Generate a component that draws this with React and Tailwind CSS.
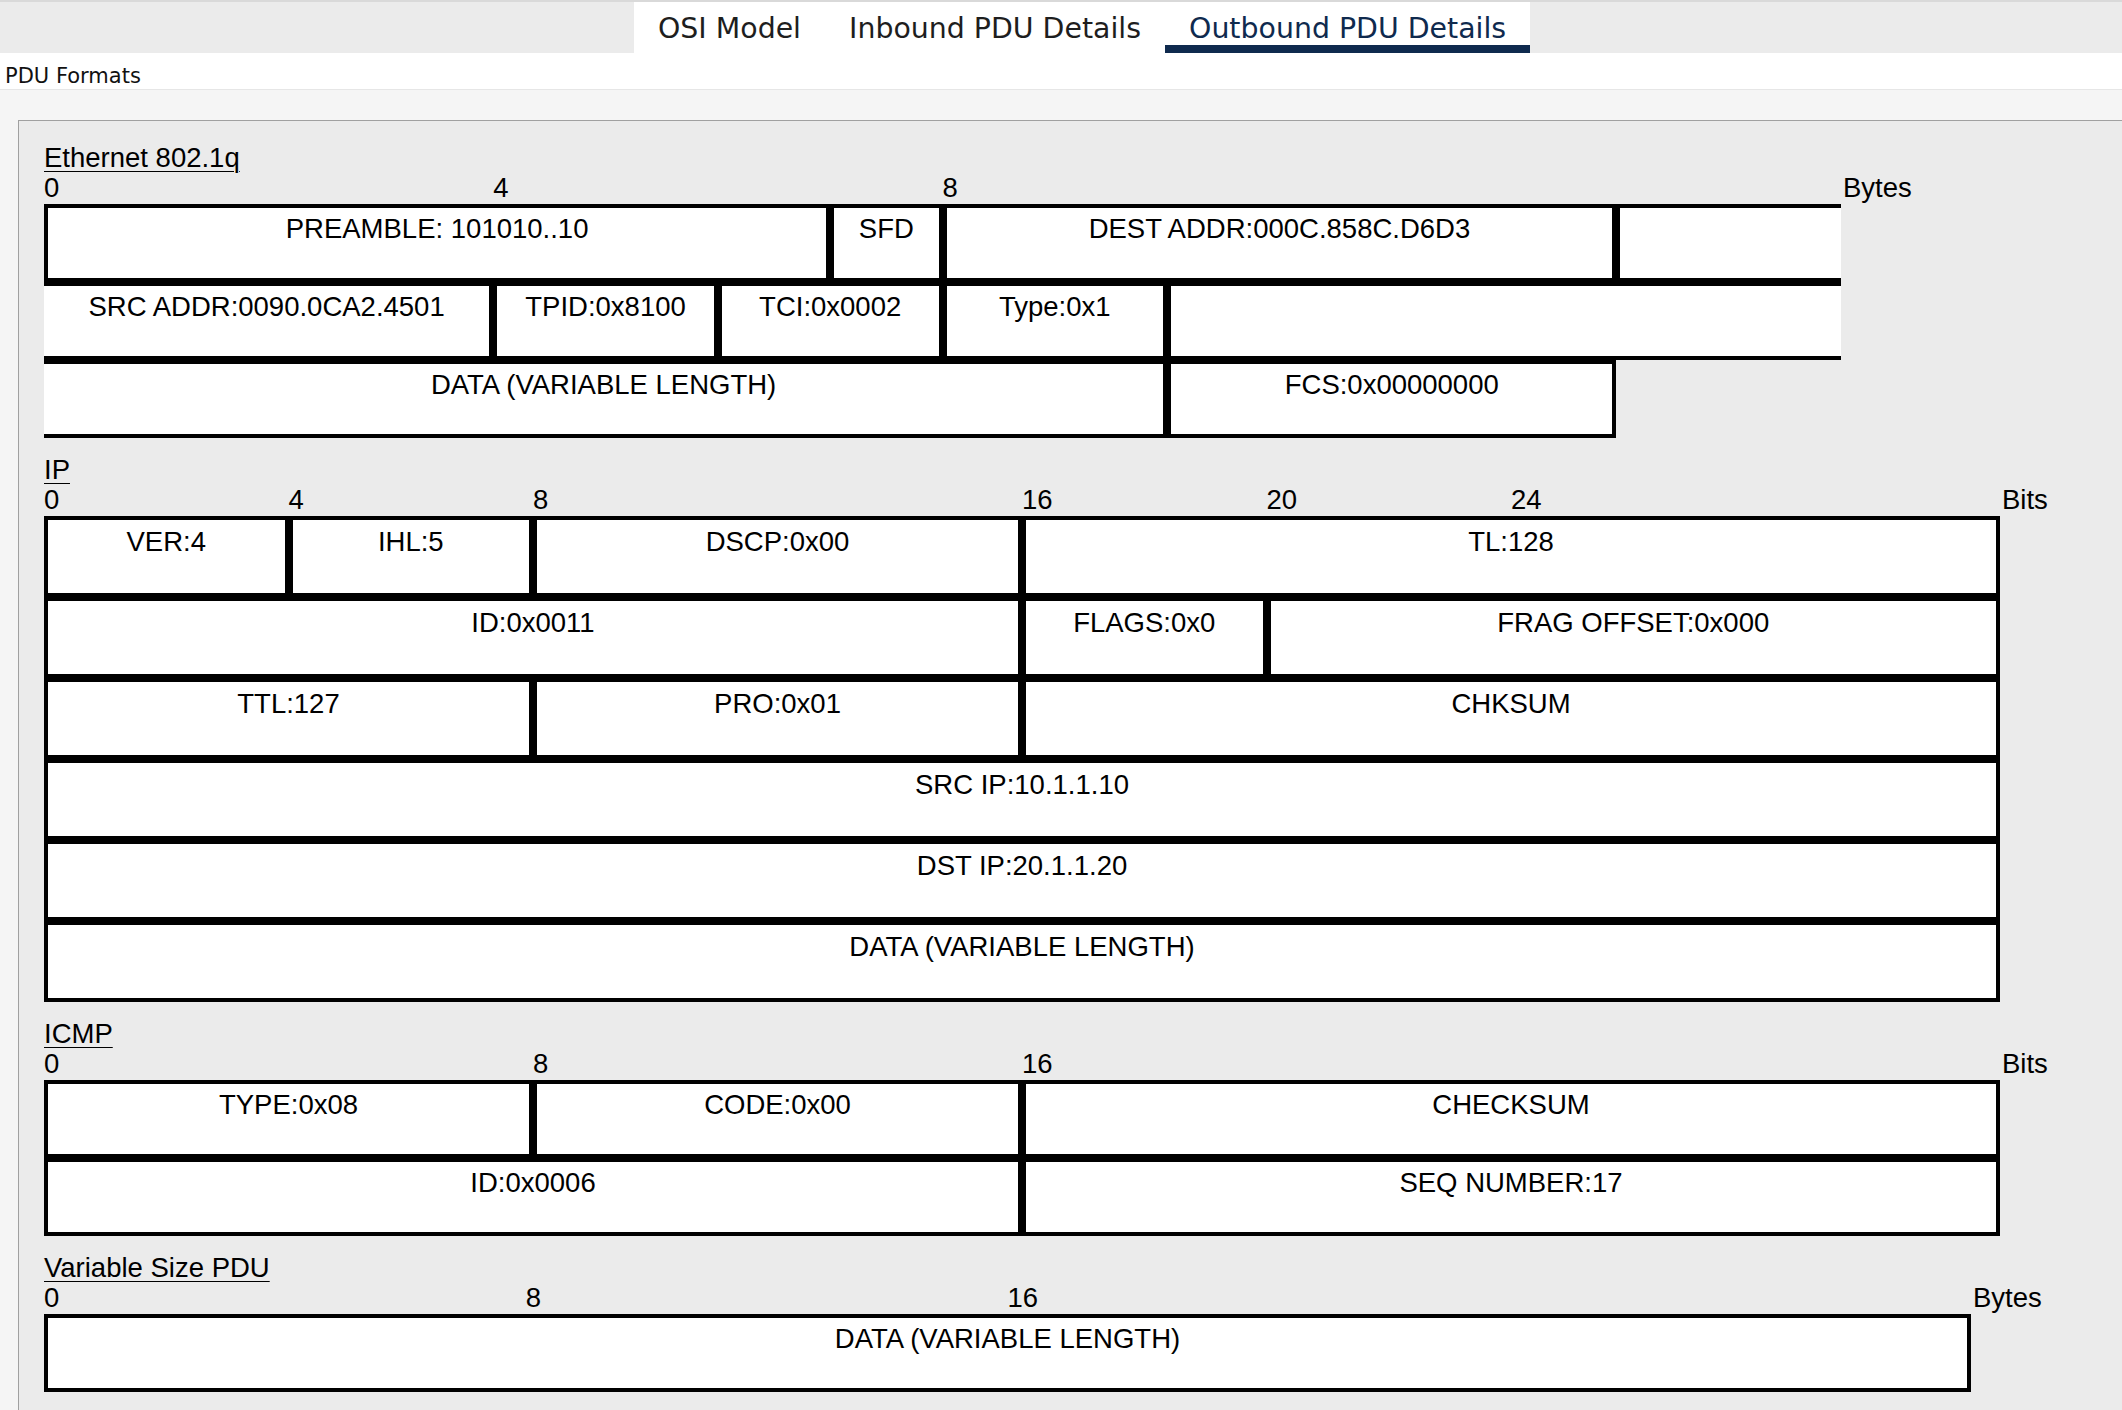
import clsx from 'clsx';

const SPAN = {
    1: 'col-span-1',
    2: 'col-span-2',
    4: 'col-span-4',
    6: 'col-span-6',
    7: 'col-span-7',
    8: 'col-span-8',
    10: 'col-span-10',
    12: 'col-span-12',
    16: 'col-span-16',
    32: 'col-span-32',
};

const START = {
    0: 'col-start-1',
    4: 'col-start-5',
    8: 'col-start-9',
    16: 'col-start-17',
    20: 'col-start-21',
    24: 'col-start-25',
};

const FORMATS = [
    {
        title: 'Ethernet 802.1q',
        unitLabel: 'Bytes',
        width: 'w-[1797px]',
        cols: 'grid-cols-16',
        ticks: [0, 4, 8],
        rowH: 'h-[78px]',
        pad: 'pt-[7px]',
        rows: [
            [
                { t: 'PREAMBLE: 101010..10', s: 7 },
                { t: 'SFD', s: 1 },
                { t: 'DEST ADDR:000C.858C.D6D3', s: 6 },
                { t: '', s: 2, noR: true },
            ],
            [
                { t: 'SRC ADDR:0090.0CA2.4501', s: 4, noL: true },
                { t: 'TPID:0x8100', s: 2 },
                { t: 'TCI:0x0002', s: 2 },
                { t: 'Type:0x1', s: 2 },
                { t: '', s: 6, noR: true },
            ],
            [
                { t: 'DATA (VARIABLE LENGTH)', s: 10, noL: true },
                { t: 'FCS:0x00000000', s: 4 },
            ],
        ],
    },
    {
        title: 'IP',
        unitLabel: 'Bits',
        width: 'w-[1956px]',
        cols: 'grid-cols-32',
        ticks: [0, 4, 8, 16, 20, 24],
        rowH: 'h-[81px]',
        pad: 'pt-[8px]',
        rows: [
            [
                { t: 'VER:4', s: 4 },
                { t: 'IHL:5', s: 4 },
                { t: 'DSCP:0x00', s: 8 },
                { t: 'TL:128', s: 16 },
            ],
            [
                { t: 'ID:0x0011', s: 16 },
                { t: 'FLAGS:0x0', s: 4 },
                { t: 'FRAG OFFSET:0x000', s: 12 },
            ],
            [
                { t: 'TTL:127', s: 8 },
                { t: 'PRO:0x01', s: 8 },
                { t: 'CHKSUM', s: 16 },
            ],
            [{ t: 'SRC IP:10.1.1.10', s: 32 }],
            [{ t: 'DST IP:20.1.1.20', s: 32 }],
            [{ t: 'DATA (VARIABLE LENGTH)', s: 32 }],
        ],
    },
    {
        title: 'ICMP',
        unitLabel: 'Bits',
        width: 'w-[1956px]',
        cols: 'grid-cols-32',
        ticks: [0, 8, 16],
        rowH: 'h-[78px]',
        pad: 'pt-[7px]',
        rows: [
            [
                { t: 'TYPE:0x08', s: 8 },
                { t: 'CODE:0x00', s: 8 },
                { t: 'CHECKSUM', s: 16 },
            ],
            [
                { t: 'ID:0x0006', s: 16 },
                { t: 'SEQ NUMBER:17', s: 16 },
            ],
        ],
    },
    {
        title: 'Variable Size PDU',
        unitLabel: 'Bytes',
        width: 'w-[1927px]',
        cols: 'grid-cols-32',
        ticks: [0, 8, 16],
        rowH: 'h-[78px]',
        pad: 'pt-[7px]',
        rows: [[{ t: 'DATA (VARIABLE LENGTH)', s: 32 }]],
    },
];

const Tab = ({ label, active }) => (
    <div
        className={clsx(
            'h-full px-[24px] pt-[11px] whitespace-nowrap',
            active ? 'border-b-[8px] border-[#0f2a4e] text-[#0f2a4e]' : 'text-[#1e1e1e]'
        )}
    >
        {label}
    </div>
);

const Format = ({ format, first }) => (
    <div className={clsx(first ? 'mt-0' : 'mt-[18px]')}>
        <div className="leading-[30px] -mt-[1px] mb-[1px]">
            <span className="underline decoration-1 underline-offset-[4px]">{format.title}</span>
        </div>
        <div className="flex leading-[30px] -mt-[1px] mb-[1px]">
            <div className={clsx('grid', format.width, format.cols)}>
                {format.ticks.map((tick) => (
                    <span key={tick} className={clsx(START[tick], 'whitespace-nowrap')}>
                        {tick}
                    </span>
                ))}
            </div>
            <span className="ml-[2px]">{format.unitLabel}</span>
        </div>
        {format.rows.map((row, i) => (
            <div key={i} className={clsx('grid', format.width, format.cols)}>
                {row.map((cell, j) => (
                    <div
                        key={j}
                        className={clsx(
                            SPAN[cell.s],
                            format.rowH,
                            format.pad,
                            'flex justify-center bg-white border-y-4 border-black leading-none whitespace-nowrap',
                            cell.noL ? 'border-l-0' : 'border-l-4',
                            cell.noR ? 'border-r-0' : 'border-r-4'
                        )}
                    >
                        {cell.t}
                    </div>
                ))}
            </div>
        ))}
    </div>
);

const App = () => {
    return (
        <div className="w-full h-[1410px] flex flex-col overflow-hidden bg-[#f5f5f5]">
            <div className="h-[53px] shrink-0 flex bg-[#ebebeb] border-t-2 border-[#d9d9d9] font-['DejaVu_Sans',Verdana,sans-serif] text-[28.4px] leading-[32px]">
                <div className="ml-[634px] flex bg-white">
                    <Tab label="OSI Model" />
                    <Tab label="Inbound PDU Details" />
                    <Tab label="Outbound PDU Details" active />
                </div>
            </div>

            <div className="h-[37px] shrink-0 bg-white border-b border-[#e6e6e6] pl-[5px] pt-[11px] font-['DejaVu_Sans',Verdana,sans-serif] text-[21px] leading-[24px] text-[#111]">
                PDU Formats
            </div>

            <div className="flex-1 flex pt-[30px] pl-[18px]">
                <div className="flex-1 bg-[#ebebeb] border-t border-l border-[#a0a0a0] pl-[25px] pt-[23px] font-['Liberation_Sans',Arial,sans-serif] text-[27.5px] text-black">
                    {FORMATS.map((format, i) => (
                        <Format key={format.title} format={format} first={i === 0} />
                    ))}
                </div>
            </div>
        </div>
    );
};

export default App;
